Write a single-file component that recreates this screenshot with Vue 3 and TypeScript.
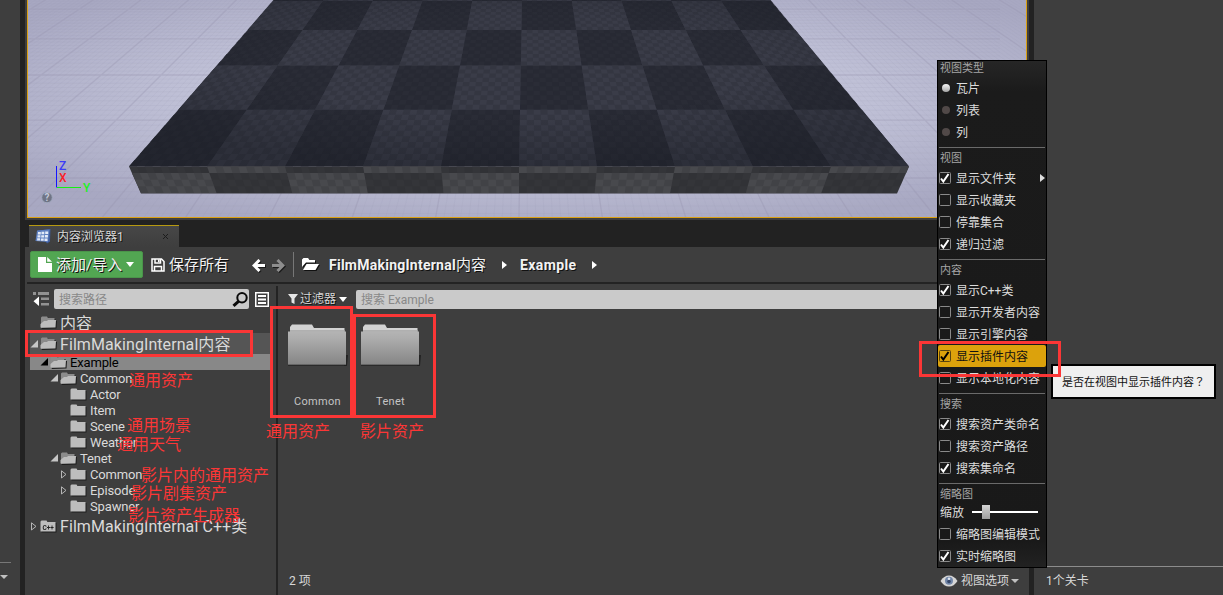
<script setup lang="ts">
type MenuItem = {
  kind: 'header' | 'radio' | 'check' | 'sep' | 'slider'
  label?: string
  on?: boolean
  sub?: boolean
  hot?: boolean
}

const menu: MenuItem[] = [
  { kind: 'header', label: '视图类型' },
  { kind: 'radio', label: '瓦片', on: true },
  { kind: 'radio', label: '列表' },
  { kind: 'radio', label: '列' },
  { kind: 'sep' },
  { kind: 'header', label: '视图' },
  { kind: 'check', label: '显示文件夹', on: true, sub: true },
  { kind: 'check', label: '显示收藏夹' },
  { kind: 'check', label: '停靠集合' },
  { kind: 'check', label: '递归过滤', on: true },
  { kind: 'sep' },
  { kind: 'header', label: '内容' },
  { kind: 'check', label: '显示C++类', on: true },
  { kind: 'check', label: '显示开发者内容' },
  { kind: 'check', label: '显示引擎内容' },
  { kind: 'check', label: '显示插件内容', on: true, hot: true },
  { kind: 'check', label: '显示本地化内容' },
  { kind: 'sep' },
  { kind: 'header', label: '搜索' },
  { kind: 'check', label: '搜索资产类命名', on: true },
  { kind: 'check', label: '搜索资产路径' },
  { kind: 'check', label: '搜索集命名', on: true },
  { kind: 'sep' },
  { kind: 'header', label: '缩略图' },
  { kind: 'slider', label: '缩放' },
  { kind: 'check', label: '缩略图编辑模式' },
  { kind: 'check', label: '实时缩略图', on: true },
]

type TreeRow = {
  label: string
  cls: string
  icon: 'open' | 'closed' | 'cpp'
  arrow: 'open' | 'closed' | 'none'
}

const tree: TreeRow[] = [
  { label: '内容', cls: 'root', icon: 'open', arrow: 'none' },
  { label: 'FilmMakingInternal内容', cls: 'root parent', icon: 'open', arrow: 'open' },
  { label: 'Example', cls: 'd1 selected', icon: 'open', arrow: 'open' },
  { label: 'Common', cls: 'd2', icon: 'open', arrow: 'open' },
  { label: 'Actor', cls: 'd3', icon: 'closed', arrow: 'none' },
  { label: 'Item', cls: 'd3', icon: 'closed', arrow: 'none' },
  { label: 'Scene', cls: 'd3', icon: 'closed', arrow: 'none' },
  { label: 'Weather', cls: 'd3', icon: 'closed', arrow: 'none' },
  { label: 'Tenet', cls: 'd2', icon: 'open', arrow: 'open' },
  { label: 'Common', cls: 'd3', icon: 'closed', arrow: 'closed' },
  { label: 'Episode', cls: 'd3', icon: 'closed', arrow: 'closed' },
  { label: 'Spawner', cls: 'd3', icon: 'closed', arrow: 'none' },
  { label: 'FilmMakingInternal C++类', cls: 'root last', icon: 'cpp', arrow: 'closed' },
]

const notes = [
  { text: '通用资产', cls: 'n1' },
  { text: '通用场景', cls: 'n2' },
  { text: '通用天气', cls: 'n3' },
  { text: '影片内的通用资产', cls: 'n4' },
  { text: '影片剧集资产', cls: 'n5' },
  { text: '影片资产生成器', cls: 'n6' },
  { text: '通用资产', cls: 'n7' },
  { text: '影片资产', cls: 'n8' },
]

// Perspective projection of the checkered slab: u in columns (0..10), v in rows away from the viewer.
function project(u: number, v: number): string {
  const w = 1 / (1 / 780 + v * 0.0001815)
  const y = 166.5 - (780 - w) * 0.587
  const cx = 519 + (166.5 - y) * 0.018
  return `${(cx + (u / 10 - 0.5) * w).toFixed(1)} ${y.toFixed(1)}`
}
function quad(u: number, v: number, s: number): string {
  return `M${project(u, v)}L${project(u + s, v)}L${project(u + s, v + s)}L${project(u, v + s)}Z`
}

const SUB = 10
let lightCells = ''
let lightSpecks = ''
let darkSpecks = ''
for (let r = 0; r < 5; r++) {
  for (let c = 0; c < 10; c++) {
    const light = (r + c) % 2 === 1
    if (light) lightCells += quad(c, r, 1)
    for (let i = 0; i < SUB; i++) {
      for (let j = 0; j < SUB; j++) {
        if ((i + j) % 2) continue
        const q = quad(c + i / SUB, r + j / SUB, 1 / SUB)
        if (light) lightSpecks += q
        else darkSpecks += q
      }
    }
  }
}
const slabTop = `M${project(0, 0)}L${project(10, 0)}L${project(10, 5)}L${project(0, 5)}Z`

// Front face and bevel of the slab.
function faceX(c: number, y: number): number {
  const t = (y - 166.5) / 26.5
  return 129 + 12 * t + (c * (780 - 24 * t)) / 10
}
function faceQuad(c: number, s: number, y0: number, y1: number): string {
  return `M${faceX(c, y0)} ${y0}L${faceX(c + s, y0)} ${y0}L${faceX(c + s, y1)} ${y1}L${faceX(c, y1)} ${y1}Z`
}
let faceLight = ''
let bevelLight = ''
let faceSpecks = ''
for (let c = 0; c < 10; c++) {
  if (c % 2 === 0) faceLight += faceQuad(c, 1, 173, 193)
  else bevelLight += faceQuad(c, 1, 166.5, 173)
  for (let i = 0; i < SUB; i++) {
    for (let j = 0; j < 3; j++) {
      if ((i + j) % 2 === 0) faceSpecks += faceQuad(c + i / SUB, 1 / SUB, 173 + j * 6.67, 179.67 + j * 6.67)
    }
    if (i % 2) faceSpecks += faceQuad(c + i / SUB, 1 / SUB, 166.5, 173)
  }
}

// Ground grid lines.
let major = ''
let minor = ''
for (let k = -200; k <= 200; k++) {
  const x = 519 + 8.33 * k
  const seg = `M${x} 217L${(x + (527 - x) * 0.43).toFixed(1)} -1.4`
  if (k % 10 === 0) major += seg
  else minor += seg
}
for (let j = -9; j < 50; j++) {
  const y = -291 + 1 / (0.002132 + 0.00003 * j)
  const seg = `M0 ${y.toFixed(1)}H1000`
  if (j % 10 === 0) major += seg
  else minor += seg
}
</script>

<template>
  <div class="editor">
    <aside class="left-dock">
      <div class="dock-line"></div>
      <i class="caret dim"></i>
    </aside>
    <div class="gutter"></div>
    <main class="center">
      <section class="viewport">
        <svg class="scene" width="998" height="217" viewBox="28 0 998 217">
          <defs>
            <radialGradient id="sky" cx="0.5" cy="0.45" r="0.62">
              <stop offset="0" stop-color="#c8c9dd" />
              <stop offset="0.55" stop-color="#bfc0d6" />
              <stop offset="1" stop-color="#a8a8c2" />
            </radialGradient>
            <radialGradient id="shade" cx="0.5" cy="0.4" r="0.6">
              <stop offset="0.5" stop-color="#151820" stop-opacity="0" />
              <stop offset="1" stop-color="#151820" stop-opacity="0.35" />
            </radialGradient>
          </defs>
          <rect x="27" width="1000" height="217" fill="url(#sky)" />
          <path :d="minor" class="grid-minor" />
          <path :d="major" class="grid-major" />
          <path :d="slabTop" fill="#2a2c36" />
          <path :d="darkSpecks" fill="#272933" />
          <path :d="lightCells" fill="#3a3c48" />
          <path :d="lightSpecks" fill="#343641" />
          <path d="M273 0H771L909 166.500H129Z" fill="url(#shade)" />
          <path d="M129 166.500H909L897 193.500H141Z" fill="#343539" />
          <path :d="faceLight" fill="#48494d" />
          <path :d="bevelLight" fill="#48494d" />
          <path :d="faceSpecks" fill="#29292b" opacity="0.2" />
          <path d="M56.500 166V187.500" stroke="#1414ff" />
          <path d="M57 187.500H81" stroke="#14f014" />
          <g class="axis">
            <text x="59" y="170" fill="#3c3cf5">Z</text>
            <text x="59" y="182" fill="#fa1e28">X</text>
            <text x="83" y="192" fill="#1ef01e">Y</text>
          </g>
          <circle cx="47" cy="197.500" r="5.300" fill="#6f7485" stroke="#a1a9bf" stroke-width="1" />
          <text x="47" y="201.300" class="help">?</text>
        </svg>
      </section>

      <div class="tabs">
        <div class="tab">
          <svg width="16" height="15" viewBox="0 0 16 15">
            <path d="M3 1.500L15.500 0L15 12.500L12 14.500L11 13Z" fill="#3f5d9d" />
            <path d="M2 1.500L14.500 0.500L13 13L0.500 12Z" fill="#5f80c0" />
            <path d="M3 3h2.800v2.400H2.800zM6.500 2.700h2.800v2.500H6.500zM10.200 2.400h3v2.600h-3zM2.600 6.200h2.800v2.300H2.500zM6.300 6.200h2.800v2.300H6.200zM9.900 6h3v2.600h-3zM2.200 9.300h2.800v2.200H2.100zM5.900 9.400h2.800v2.300H5.800zM9.500 9.500h3v2.500h-3z" fill="#e3eaf8" />
          </svg>
          <span>内容浏览器1</span>
          <svg class="close" width="7" height="7" viewBox="0 0 7 7"><path d="M1 1L6 6M6 1L1 6" stroke="#1c1c1c" /></svg>
        </div>
      </div>

      <div class="toolbar">
        <div class="add">
          <svg width="14" height="15" viewBox="0 0 14 15">
            <path d="M0 0H8V6H14V15H0Z" fill="#fff" />
            <path d="M9.200 0L14 4.800H9.200Z" fill="#fff" />
          </svg>
          <span>添加/导入</span>
          <i class="caret"></i>
        </div>
        <div class="save">
          <svg width="14" height="14" viewBox="0 0 14 14" fill="none" stroke="#fff" stroke-width="1.500">
            <path d="M1 1H10.500L13 3.500V13H1Z" />
            <path d="M4 1V5H9.500V1M3.500 13V8.500H10.500V13M7.700 1.500V4" />
          </svg>
          <span>保存所有</span>
        </div>
        <svg class="nav" width="13" height="13" viewBox="0 0 13 13"><path d="M7.500 1L2 6.500L7.500 12M2 6.500H13" fill="none" stroke="#fff" stroke-width="3" /></svg>
        <svg class="nav dimmed" width="13" height="13" viewBox="0 0 13 13"><path d="M5.500 1L11 6.500L5.500 12M11 6.500H0" fill="none" stroke="#8d8d8d" stroke-width="3" /></svg>
        <div class="bar"></div>
        <svg class="crumb-icon" width="17" height="13" viewBox="0 0 17 13">
          <path d="M0 9V1.500L1.500 0H6L7.500 2H13V4.500H4Z" fill="#fff" />
          <path d="M4.500 6H17L13.500 12H1Z" fill="#fff" />
        </svg>
        <span class="crumb first"><b>FilmMakingInternal</b>内容</span>
        <i class="tri"></i>
        <span class="crumb second"><b>Example</b></span>
        <i class="tri"></i>
      </div>

      <div class="browser">
        <div class="sources">
          <div class="search-row">
            <svg class="collapse" width="16" height="14" viewBox="0 0 16 14">
              <path d="M0 0h3v3H0zM5 0h11v3H5zM8 5.500h8v2.500H8zM8 11h8v2.500H8z" fill="#929292" />
              <path d="M6 4.500V14L0.500 9.200Z" fill="#fff" />
            </svg>
            <div class="field">
              <span>搜索路径</span>
              <svg width="16" height="15" viewBox="0 0 16 15" fill="none" stroke="#0a0a0a">
                <circle cx="10" cy="5.800" r="4.700" stroke-width="2" />
                <path d="M6.500 9.300L1.500 13.800" stroke-width="3" />
              </svg>
            </div>
            <svg class="list-icon" width="14" height="15" viewBox="0 0 14 15">
              <rect x="0.750" y="0.750" width="12.500" height="13.500" fill="none" stroke="#fff" stroke-width="1.500" />
              <path d="M3 3h8v2H3zM3 6.500h8v2H3zM3 10h8v2H3z" fill="#fff" />
            </svg>
          </div>
          <div class="tree">
            <div v-for="(row, i) in tree" :key="i" class="row" :class="row.cls">
              <span class="expander">
                <svg v-if="row.arrow === 'open'" width="8" height="8" viewBox="0 0 8 8"><path d="M8 0V7.500H0.500Z" class="tri-open" /></svg>
                <svg v-if="row.arrow === 'closed'" width="7" height="9" viewBox="0 0 7 9"><path d="M1.500 0.800V8L6 4.400Z" fill="none" stroke="#b5b5b5" /></svg>
              </span>
              <svg class="folder" width="17" height="13" viewBox="0 0 17 13">
                <template v-if="row.icon === 'open'">
                  <path d="M1 12V1.500L2 0.500H7L8 2H14.500V11Z" fill="#8b8b8b" />
                  <path d="M0.500 11.500V8L4 5H7L8 4H16L15.500 11.500Z" fill="#bdbdbd" />
                </template>
                <template v-else>
                  <path d="M0.500 11.500V1.500L1.500 0.500H6.500L7.500 2H15.500V11.500Z" fill="#bdbdbd" />
                  <text v-if="row.icon === 'cpp'" x="8.200" y="9.500" class="cpp">C++</text>
                </template>
              </svg>
              <span class="name">{{ row.label }}</span>
            </div>
          </div>
        </div>
        <div class="split"></div>
        <div class="assets">
          <div class="filter-row">
            <svg width="10" height="10" viewBox="0 0 10 10"><path d="M0 0H10L6.500 4.500V10L3.500 8.500V4.500Z" fill="#e6e6e6" /></svg>
            <span class="filter">过滤器</span>
            <i class="caret"></i>
            <div class="field wide">搜索 Example</div>
          </div>
          <div class="tiles">
            <div v-for="name in ['Common', 'Tenet']" :key="name" class="tile">
              <svg width="61" height="43" viewBox="0 0 61 43">
                <defs>
                  <linearGradient id="front" x1="0" y1="0" x2="0" y2="1">
                    <stop offset="0" stop-color="#b4b4b4" />
                    <stop offset="0.2" stop-color="#adadad" />
                    <stop offset="1" stop-color="#858585" />
                  </linearGradient>
                </defs>
                <path d="M57 31H60L59 42H56Z" fill="#232323" />
                <path d="M2 8V3L4 0.500H24L26 4H56.500V8Z" fill="#d2d2d2" />
                <path d="M2 6H56.500V8H2Z" fill="#b0b0b0" />
                <rect y="7.500" width="58" height="33.500" fill="url(#front)" />
                <path d="M0 41.200H58" stroke="#222" />
              </svg>
              <span>{{ name }}</span>
            </div>
          </div>
          <div class="status">
            <span class="count">2 项</span>
            <div class="view-options">
              <svg width="18" height="12" viewBox="0 0 18 12">
                <path d="M0.500 6Q4 0.500 9 0.500T17.500 6Q14 11.500 9 11.500T0.500 6Z" fill="#d5d5d5" />
                <circle cx="9" cy="5.800" r="4" fill="#7186a8" />
                <circle cx="9" cy="6.500" r="1.800" fill="#35486a" />
                <circle cx="9" cy="3.800" r="1.300" fill="#dfe6f0" />
              </svg>
              <span>视图选项</span>
              <i class="caret dim"></i>
            </div>
          </div>
        </div>
      </div>
    </main>
    <div class="gutter"></div>
    <aside class="right-dock">
      <div class="level-count">1个关卡</div>
    </aside>

    <div class="menu">
      <div v-for="(m, i) in menu" :key="i" :class="['m-' + m.kind, { hot: m.hot }]">
        <template v-if="m.kind === 'header'">{{ m.label }}</template>
        <template v-else-if="m.kind === 'radio'">
          <i class="radio" :class="{ on: m.on }"></i><span>{{ m.label }}</span>
        </template>
        <template v-else-if="m.kind === 'check'">
          <svg class="box" width="12" height="13" viewBox="0 0 12 13">
            <rect x="0.500" y="0.500" width="11" height="11" rx="1" class="box-frame" />
            <path v-if="m.on" d="M2 6.500L4.300 9.500L9.500 2" class="box-tick" />
          </svg>
          <span>{{ m.label }}</span>
          <i v-if="m.sub" class="tri sub"></i>
        </template>
        <template v-else-if="m.kind === 'slider'">
          <span>{{ m.label }}</span>
          <div class="track"><i class="thumb"></i></div>
        </template>
      </div>
    </div>

    <div class="tooltip">是否在视图中显示插件内容<span class="wide-mark">？</span></div>

    <div class="mark b1"></div>
    <div class="mark b2"></div>
    <div class="mark b3"></div>
    <div class="mark b4"></div>
    <span v-for="n in notes" :key="n.cls" class="note" :class="n.cls">{{ n.text }}</span>
  </div>
</template>

<style>
body {
  margin: 0;
  overflow: hidden;
  background: #3e3e3e;
}
</style>

<style scoped>
.editor {
  position: relative;
  display: grid;
  grid-template-columns: 20px 5px 1004px 5px 189px;
  width: 1223px;
  height: 595px;
  overflow: hidden;
  background: #3e3e3e;
  color: #d8d8d8;
  font: 12px/16px Roboto, 'Noto Sans CJK SC', sans-serif;
  white-space: nowrap;
}
.editor svg {
  display: block;
  flex: none;
}
.gutter {
  background: #222;
}
.left-dock {
  padding-top: 562px;
}
.dock-line {
  width: 11px;
  height: 1px;
  margin-bottom: 12px;
  background: #777;
}
.caret {
  display: block;
  flex: none;
  width: 0;
  height: 0;
  border: 4.5px solid transparent;
  border-top: 5px solid #fff;
  border-bottom: 0;
}
.caret.dim {
  border-top: 4px solid #c0c0c0;
}
.tri {
  flex: none;
  width: 0;
  height: 0;
  border: 4.5px solid transparent;
  border-left: 5px solid #fff;
  border-right: 0;
}
.center {
  display: flex;
  flex-direction: column;
  height: 595px;
  min-width: 0;
}
.viewport {
  box-sizing: border-box;
  width: 1000px;
  height: 218px;
  margin: 0 2px 2px;
  border: 1px solid #dba011;
  border-top: 0;
}
.grid-minor {
  fill: none;
  stroke: #9a9ab4;
  stroke-width: 0.6;
  opacity: 0.2;
}
.grid-major {
  fill: none;
  stroke: #9594ae;
  stroke-width: 1.3;
  opacity: 0.34;
}
.axis {
  font: 500 12px Roboto, sans-serif;
}
.help {
  font: bold 10px Roboto, sans-serif;
  text-anchor: middle;
  fill: #c3c9da;
}
.tabs {
  height: 27px;
  background: #222;
  padding: 5px 0 0 4px;
  box-sizing: border-box;
}
.tab {
  display: flex;
  align-items: center;
  box-sizing: border-box;
  width: 150px;
  height: 22px;
  padding: 0 10px 0 6px;
  border-top: 1px solid #b79a10;
  background: linear-gradient(#474747, #3e3e3e);
  text-shadow: 1px 1px #111;
}
.tab span {
  margin-left: 6px;
}
.tab .close {
  margin-left: auto;
}
.toolbar {
  display: flex;
  align-items: center;
  box-sizing: border-box;
  height: 37px;
  margin: 0 2px;
  padding-left: 3px;
  border-bottom: 2px solid #232323;
  font-size: 15px;
  color: #f2f2f2;
  text-shadow: 1px 1px #111;
}
.add {
  display: flex;
  align-items: center;
  box-sizing: border-box;
  width: 113px;
  height: 27px;
  padding-left: 7px;
  border: 1px solid #4a944a;
  border-radius: 2px;
  background: #52a652;
}
.add span {
  width: 65px;
  margin: 0 5px 0 4px;
}
.save {
  display: flex;
  align-items: center;
  margin-left: 8px;
}
.save span {
  width: 60px;
  margin-left: 4px;
}
.nav {
  margin: 1px 0 0 23px;
  filter: drop-shadow(1px 1px #1a1a1a);
}
.nav.dimmed {
  margin-left: 7px;
}
.bar {
  width: 1px;
  height: 25px;
  margin: 0 8px;
  background: #777;
}
.crumb-icon {
  filter: drop-shadow(1px 1px #111);
}
.crumb.first {
  width: 159px;
  margin: 0 14px 0 10px;
}
.crumb.second {
  width: 58px;
  margin: 0 14px 0 13px;
}
.crumb b {
  font-size: 14px;
  letter-spacing: 0.25px;
}
.crumb.second b {
  letter-spacing: 0.4px;
}
.browser {
  display: flex;
  flex: 1;
  margin-left: 2px;
  min-height: 0;
}
.sources {
  width: 249px;
}
.search-row {
  display: flex;
  height: 28px;
  padding: 5px 0 0 6px;
  box-sizing: border-box;
}
.collapse {
  margin: 3px 5px 0 0;
}
.field {
  display: flex;
  align-items: center;
  box-sizing: border-box;
  width: 195px;
  height: 20px;
  padding: 0 1px 0 5px;
  border-radius: 2px;
  background: #cacaca;
  color: #888;
}
.field span {
  padding-top: 1px;
}
.field svg {
  margin-left: auto;
}
.list-icon {
  margin: 3px 0 0 6px;
}
.row {
  display: flex;
  align-items: center;
  height: 16px;
  margin: 0 6px 0 3px;
  font-size: 13px;
  letter-spacing: -0.15px;
  color: #dadada;
}
.expander {
  width: 8px;
  flex: none;
}
.name {
  padding-top: 2px;
}
.row .folder {
  margin: 0 3px 0 2px;
  filter: drop-shadow(1px 1px 0.5px #1c1c1c);
}
.tri-open {
  fill: #c6c6c6;
}
.row.root {
  height: 21px;
  font-size: 16px;
  letter-spacing: 0.08px;
}
.row.root.last {
  height: 24px;
}
.row.parent {
  background: #555;
}
.row.d1 {
  padding-left: 10px;
}
.row.d2 {
  padding-left: 20px;
}
.row.d3 {
  padding-left: 30px;
}
.row.selected {
  background: #888;
  color: #000;
}
.row.selected .tri-open {
  fill: #000;
}
.cpp {
  font: bold 6.5px Roboto, sans-serif;
  text-anchor: middle;
  fill: #222;
}
.split {
  width: 2px;
  margin-top: 2px;
  background: #232323;
}
.assets {
  display: flex;
  flex: 1;
  flex-direction: column;
  min-width: 0;
}
.filter-row {
  display: flex;
  align-items: center;
  height: 30px;
  padding-left: 10px;
  text-shadow: 1px 1px #111;
}
.filter {
  width: 36px;
  margin: 0 3px 0 2px;
}
.field.wide {
  flex: 1;
  margin-left: 9px;
  height: 19px;
  margin-top: 1px;
  text-shadow: none;
}
.tiles {
  display: flex;
  gap: 12px;
  padding: 10px 0 0 10px;
}
.tile {
  width: 61px;
}
.tile span {
  display: block;
  width: 59px;
  margin-top: 27px;
  font-size: 11px;
  letter-spacing: 0.3px;
  text-align: center;
  color: #c4c4c4;
}
.status {
  display: flex;
  justify-content: space-between;
  height: 16px;
  margin-top: auto;
  padding: 0 10px 6px 11px;
}
.view-options {
  display: flex;
  align-items: center;
}
.view-options span {
  margin: 0 2px 0 3px;
}
.level-count {
  margin-top: 566px;
  padding: 6px 12px;
  border-top: 1px solid #8c8c8c;
}
.menu {
  position: absolute;
  left: 937px;
  top: 60px;
  box-sizing: border-box;
  width: 110px;
  height: 508px;
  border: 1px solid #000;
  background: linear-gradient(#262626, #1b1b1b 30px, #191919 480px, #222);
  color: #dcdcdc;
}
.m-header {
  height: 16px;
  padding-left: 2px;
  font-size: 11px;
  line-height: 16px;
  color: #a5a5a5;
}
.m-sep {
  height: 1px;
  margin: 4px 1px 3px;
  background: #6a6a6a;
}
.m-radio,
.m-check {
  display: flex;
  align-items: center;
  height: 22px;
  padding-left: 1px;
}
.m-radio span,
.m-check span {
  margin-left: 5px;
  padding-top: 1px;
}
.radio {
  width: 8px;
  height: 8px;
  margin: 0 1px 0 3px;
  border-radius: 50%;
  background: #514948;
}
.radio.on {
  background: linear-gradient(#f4f4f4, #a5a5a5);
}
.box-frame {
  fill: none;
  stroke: #8a8a8a;
}
.box-tick {
  fill: none;
  stroke: #fff;
  stroke-width: 2;
}
.hot {
  background: #dca20c;
  border-radius: 2px;
  color: #111;
}
.hot .box-frame {
  stroke: #5a4510;
}
.hot .box-tick {
  stroke: #000;
}
.tri.sub {
  margin: 0 1px 0 auto;
  border-left-color: #ddd;
}
.m-slider {
  display: flex;
  align-items: center;
  box-sizing: border-box;
  height: 20px;
  padding: 0 0 2px 2px;
}
.m-slider span {
  padding-top: 1px;
}
.track {
  display: flex;
  align-items: center;
  box-sizing: border-box;
  width: 66px;
  height: 2px;
  margin-left: 8px;
  padding-left: 10px;
  background: #fff;
}
.thumb {
  width: 8px;
  height: 14px;
  background: linear-gradient(#d4d4d4, #9e9e9e);
}
.tooltip {
  position: absolute;
  left: 1051px;
  top: 364px;
  box-sizing: border-box;
  width: 165px;
  height: 35px;
  padding-left: 9px;
  border: 2px solid #000;
  background: #efefef;
  color: #111;
  font-size: 11px;
  line-height: 31px;
}
.wide-mark {
  font-family: 'Noto Sans CJK TC', sans-serif;
}
.mark {
  position: absolute;
  box-sizing: border-box;
  border: 3px solid #fb3636;
}
.b1 {
  left: 25px;
  top: 330px;
  width: 228px;
  height: 27px;
}
.b2 {
  left: 270px;
  top: 306px;
  width: 83px;
  height: 112px;
}
.b3 {
  left: 353px;
  top: 314px;
  width: 83px;
  height: 104px;
}
.b4 {
  left: 919px;
  top: 341px;
  width: 142px;
  height: 36px;
}
.note {
  position: absolute;
  font-size: 16px;
  line-height: 20px;
  color: #fb3636;
}
.n1 {
  left: 129px;
  top: 371px;
}
.n2 {
  left: 127px;
  top: 416px;
}
.n3 {
  left: 117px;
  top: 435px;
}
.n4 {
  left: 141px;
  top: 466px;
}
.n5 {
  left: 131px;
  top: 484px;
}
.n6 {
  left: 128px;
  top: 506px;
}
.n7 {
  left: 266px;
  top: 422px;
}
.n8 {
  left: 360px;
  top: 422px;
}
</style>
